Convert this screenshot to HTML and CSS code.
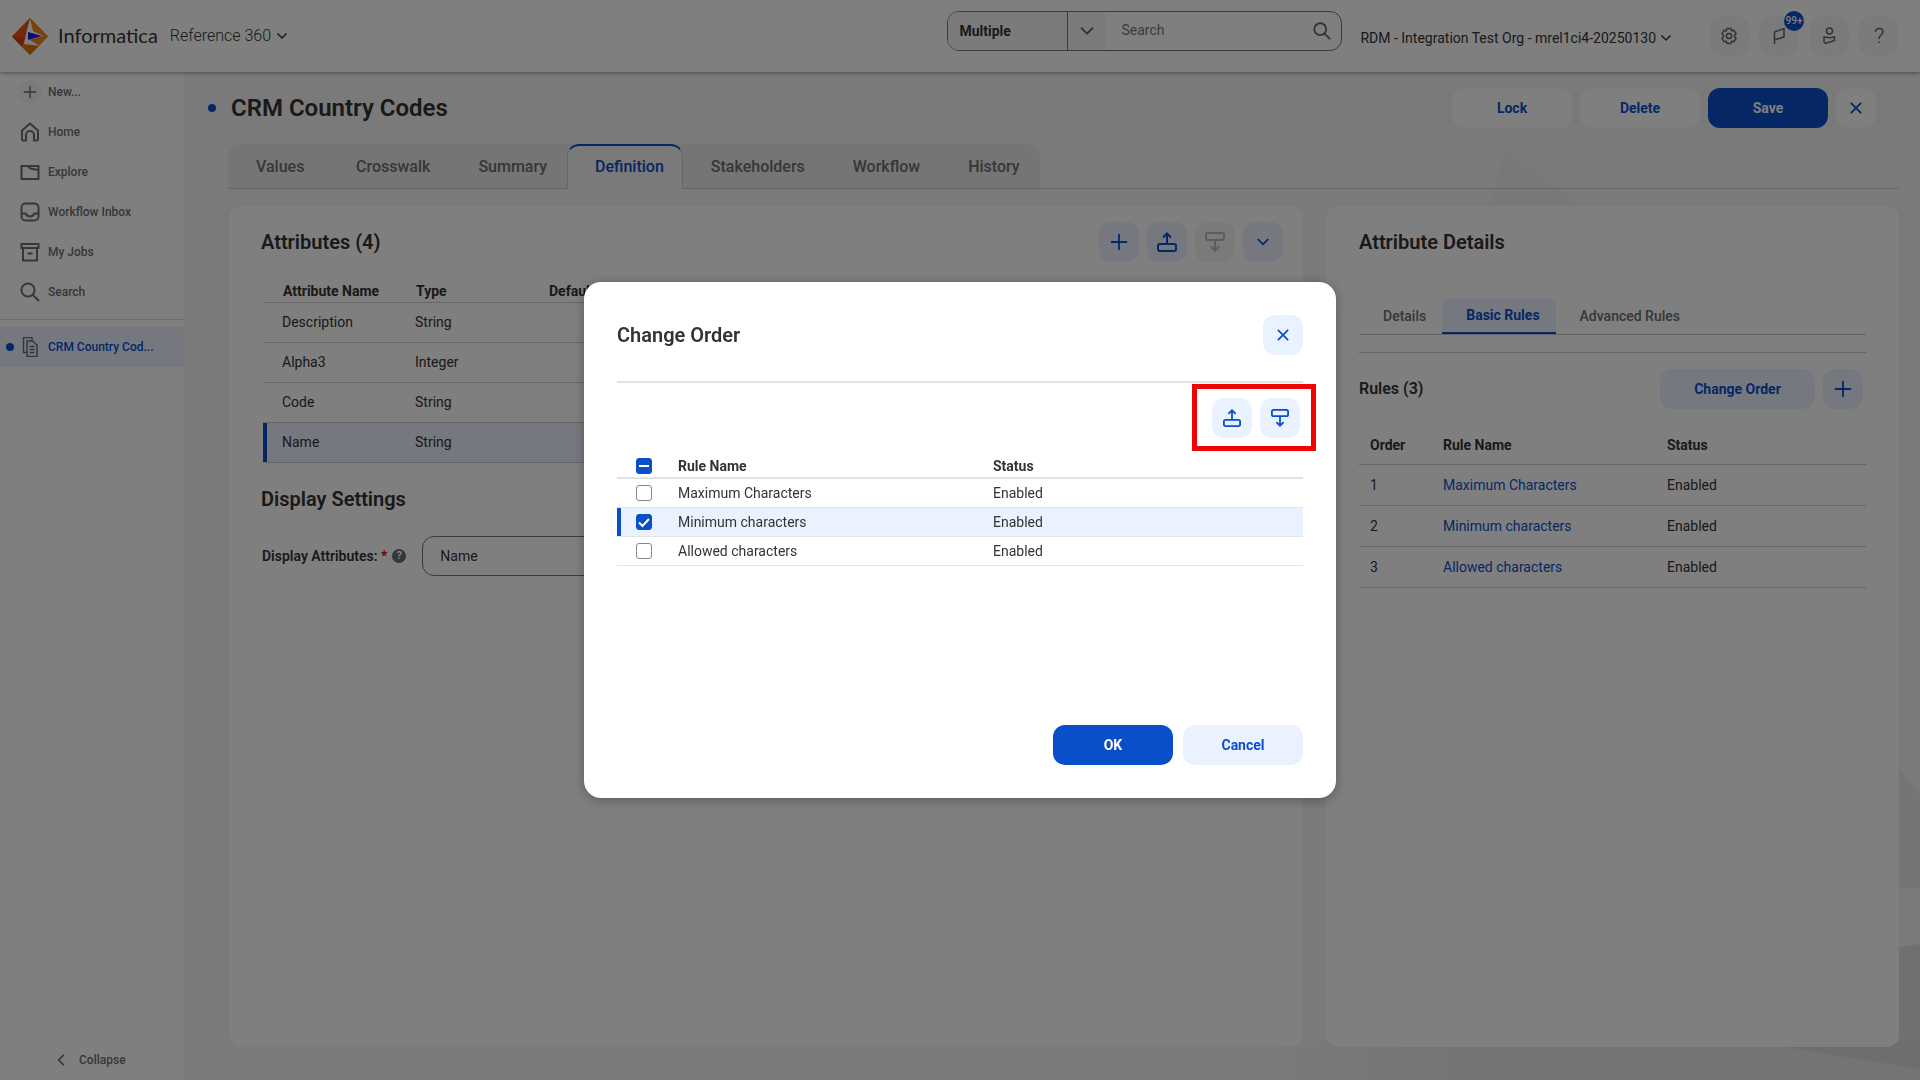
FILE: index.html
```html
<!DOCTYPE html>
<html lang="en">
<head>
<meta charset="utf-8">
<title>CRM Country Codes - Reference 360</title>
<meta name="viewport" content="width=device-width, initial-scale=1">
<link rel="stylesheet" href="styles.css">
</head>
<body>
<svg class="sprite" aria-hidden="true">
  <symbol id="i-chevron" viewBox="0 0 12 12"><path d="M1.500 3.500L6 8l4.500-4.500"/></symbol>
  <symbol id="i-plus" viewBox="0 0 20 20"><path d="M10 1v18M1 10h18"/></symbol>
  <symbol id="i-close" viewBox="0 0 14 14"><path d="M1 1l12 12M13 1L1 13"/></symbol>
  <symbol id="i-search" viewBox="0 0 20 20"><circle cx="8" cy="8" r="6.600"/><path d="M12.800 12.800L19 19"/></symbol>
  <symbol id="i-up" viewBox="0 0 20 20"><rect x="1" y="12" width="18" height="7" rx="2"/><path d="M10 12V1.500M6 5.500l4-4 4 4"/></symbol>
  <symbol id="i-down" viewBox="0 0 20 20"><rect x="1" y="1" width="18" height="7" rx="2"/><path d="M10 8v10.500M6 14.500l4 4 4-4"/></symbol>
</svg>

<div class="app">
  <header class="topbar">
    <a class="brand" href="#" aria-label="Informatica home">
      <svg class="logo" viewBox="0 0 36 37">
        <path fill="#f08414" d="M18 0l18 18.500L18 37 0 18.500z"/>
        <path fill="#e8501a" d="M18 0L0 18.500l10 10.300L15 14z"/>
        <path fill="#cf3c18" d="M0 18.500l10 10.300 3-8.300z"/>
        <path fill="#e07008" d="M10 28.800L18 37l9-9.300-8-1.700z"/>
        <path fill="#fff" d="M18 0l-3.500 14L12 26l15 1.700-9-6 14-3.700-11-5z"/>
        <path fill="#f08414" d="M18 0l18 18.500-8.500 8.700L18 22l14-4-10-5z"/>
        <path fill="#1a1aee" d="M16 14l14 4-14 4z"/>
      </svg>
      <span class="brand-name">Informatica</span>
    </a>
    <button class="product" type="button">Reference 360 <svg class="ico s12"><use href="#i-chevron"/></svg></button>
    <form class="finder" role="search">
      <select class="scope" aria-label="Search scope"><option>Multiple</option></select>
      <button class="scope-toggle" type="button" aria-label="Open scopes"><svg class="ico s16"><use href="#i-chevron"/></svg></button>
      <input class="finder-text" type="text" placeholder="Search" aria-label="Search">
      <button class="finder-go" type="button" aria-label="Run search"><svg class="ico s18"><use href="#i-search"/></svg></button>
    </form>
    <button class="org" type="button">RDM - Integration Test Org - mrel1ci4-20250130 <svg class="ico s12"><use href="#i-chevron"/></svg></button>
    <div class="tools">
      <button class="btn-icon gray" type="button" aria-label="Settings"><svg class="ico thin s18" viewBox="0 0 18 18"><circle cx="9" cy="9" r="2.600"/><path d="M7 1.500h4l.7 2.200 2.300-.3 2 3.200-1.500 1.600v1.600L16 11.400l-2 3.200-2.300-.3-.7 2.200H7l-.7-2.200-2.300.3-2-3.200 1.500-1.600V8.200L2 6.600l2-3.200 2.300.3z"/></svg></button>
      <button class="btn-icon gray" type="button" aria-label="Notifications"><svg class="ico thin s18" viewBox="0 0 18 18"><path d="M4.500 17V5L14 1.500v8.500L4.500 13"/></svg><span class="badge">99+</span></button>
      <button class="btn-icon gray" type="button" aria-label="Account"><svg class="ico thin s18" viewBox="0 0 18 18"><circle cx="9.500" cy="4" r="3"/><path d="M4 10l6 .8 4.500-.8v3.500L5.500 16.500 4 15z"/></svg></button>
      <button class="btn-icon gray" type="button" aria-label="Help"><svg class="ico thin s18" viewBox="0 0 18 18"><path d="M5.500 5c0-5 7.500-4.500 7.500-.5 0 3.500-4 3-4 7.500M9 14.500v1.500"/></svg></button>
    </div>
  </header>

  <div class="body">
    <nav class="side" aria-label="Main">
      <ul class="side-list">
        <li><a class="side-item" href="#"><span class="side-ico round"><svg class="ico s14"><use href="#i-plus"/></svg></span>New...</a></li>
        <li><a class="side-item" href="#"><span class="side-ico"><svg class="ico s20" viewBox="0 0 20 20"><path d="M3 18.500a1 1 0 0 1-1-1V8.500L10 1.500l8 7v9a1 1 0 0 1-1 1h-3V13a4 4 0 0 0-8 0v5.500z"/></svg></span>Home</a></li>
        <li><a class="side-item" href="#"><span class="side-ico"><svg class="ico s20" viewBox="0 0 20 20"><path d="M1.500 4h6l3 2.500 8 1.500V17h-17zM7.500 4h11v4"/></svg></span>Explore</a></li>
        <li><a class="side-item" href="#"><span class="side-ico"><svg class="ico s20" viewBox="0 0 20 20"><rect x="1.500" y="1.500" width="17" height="17" rx="4"/><path d="M1.500 11.500h4c2 4 7 4 9 0h4"/></svg></span>Workflow Inbox</a></li>
        <li><a class="side-item" href="#"><span class="side-ico"><svg class="ico s20" viewBox="0 0 20 20"><path d="M1.500 2h17v4h-17zM3 6v12.500h14V6M7.500 11.500h5"/></svg></span>My Jobs</a></li>
        <li><a class="side-item" href="#"><span class="side-ico"><svg class="ico s20"><use href="#i-search"/></svg></span>Search</a></li>
      </ul>
      <a class="side-item current" href="#"><span class="dot"></span><span class="side-ico"><svg class="ico thin s20" viewBox="0 0 20 20"><path d="M7 15.500H3.500v-15H12V4M7 4h5.500L17 8v11.500H7zM9.500 9.500h5M9.500 12.500h5M9.500 15.500h5"/></svg></span>CRM Country Cod...</a>
      <button class="collapse" type="button"><svg class="ico s14 left"><use href="#i-chevron"/></svg>Collapse</button>
    </nav>

    <main class="work">
      <svg class="backdrop" viewBox="0 0 1736 1008" preserveAspectRatio="xMaxYMin slice" aria-hidden="true">
        <defs><linearGradient id="fade" x1="0" x2="1"><stop offset="0" stop-color="#f4f4f4"/><stop offset=".35" stop-color="#e8e8e8"/><stop offset="1" stop-color="#e8e8e8"/></linearGradient></defs>
        <path fill="#f0f0f0" d="M1321 78l75 56h-90z"/>
        <path fill="#ebebeb" d="M1710 690l26 32v94h-26z"/>
        <path fill="#e0e0e0" d="M1700 878l36-6v136h-36z"/>
        <path fill="url(#fade)" d="M1090 970h646v38h-646z"/>
        <path fill="#dcdcdc" d="M1570 970h166v27z"/>
      </svg>
      <div class="title-row">
        <span class="dot"></span>
        <h1>CRM Country Codes</h1>
        <div class="actions">
          <button class="btn white" type="button">Lock</button>
          <button class="btn white" type="button">Delete</button>
          <button class="btn primary" type="button">Save</button>
          <button class="btn-icon white" type="button" aria-label="Close"><svg class="ico s12"><use href="#i-close"/></svg></button>
        </div>
      </div>
      <div class="tabs">
        <div class="tab-strip" role="tablist">
          <button class="tab" role="tab" type="button">Values</button>
          <button class="tab" role="tab" type="button">Crosswalk</button>
          <button class="tab" role="tab" type="button">Summary</button>
          <button class="tab active" role="tab" type="button" aria-selected="true">Definition</button>
          <button class="tab" role="tab" type="button">Stakeholders</button>
          <button class="tab" role="tab" type="button">Workflow</button>
          <button class="tab" role="tab" type="button">History</button>
        </div>
      </div>

      <div class="panels">
        <section class="panel attributes">
          <div class="panel-head">
            <h2>Attributes (4)</h2>
            <div class="icon-row">
              <button class="btn-icon" type="button" aria-label="Add attribute"><svg class="ico s18"><use href="#i-plus"/></svg></button>
              <button class="btn-icon" type="button" aria-label="Move up"><svg class="ico s20"><use href="#i-up"/></svg></button>
              <button class="btn-icon off" type="button" aria-label="Move down" disabled><svg class="ico s20"><use href="#i-down"/></svg></button>
              <button class="btn-icon" type="button" aria-label="More actions"><svg class="ico s14"><use href="#i-chevron"/></svg></button>
            </div>
          </div>
          <div class="attr-table">
            <table class="grid attr-grid">
              <colgroup><col class="c-attr"><col class="c-type"><col></colgroup>
              <thead><tr><th>Attribute Name</th><th>Type</th><th>Default Value</th></tr></thead>
              <tbody>
                <tr><td>Description</td><td>String</td><td></td></tr>
                <tr><td>Alpha3</td><td>Integer</td><td></td></tr>
                <tr><td>Code</td><td>String</td><td></td></tr>
                <tr class="picked"><td>Name</td><td>String</td><td></td></tr>
              </tbody>
            </table>
          </div>
          <h2 class="settings-title">Display Settings</h2>
          <div class="field">
            <label for="display-attributes">Display Attributes: <span class="req">*</span></label>
            <span class="help" aria-hidden="true">?</span>
            <input id="display-attributes" type="text" value="Name">
          </div>
        </section>

        <section class="panel details">
          <div class="panel-head"><h2>Attribute Details</h2></div>
          <div class="subtabs" role="tablist">
            <button class="subtab" role="tab" type="button">Details</button>
            <button class="subtab active" role="tab" type="button" aria-selected="true">Basic Rules</button>
            <button class="subtab" role="tab" type="button">Advanced Rules</button>
          </div>
          <div class="rules-head">
            <h3>Rules (3)</h3>
            <button class="btn tint wide" type="button">Change Order</button>
            <button class="btn-icon" type="button" aria-label="Add rule"><svg class="ico s18"><use href="#i-plus"/></svg></button>
          </div>
          <table class="grid rule-grid">
            <colgroup><col class="c-order"><col class="c-rule"><col></colgroup>
            <thead><tr><th>Order</th><th>Rule Name</th><th>Status</th></tr></thead>
            <tbody>
              <tr><td>1</td><td><a href="#">Maximum Characters</a></td><td>Enabled</td></tr>
              <tr><td>2</td><td><a href="#">Minimum characters</a></td><td>Enabled</td></tr>
              <tr><td>3</td><td><a href="#">Allowed characters</a></td><td>Enabled</td></tr>
            </tbody>
          </table>
        </section>
      </div>
    </main>
  </div>
</div>

<div class="overlay">
  <div class="dialog" role="dialog" aria-modal="true" aria-labelledby="dialog-title">
    <div class="dialog-head">
      <h2 id="dialog-title">Change Order</h2>
      <button class="btn-icon" type="button" aria-label="Close dialog"><svg class="ico s12"><use href="#i-close"/></svg></button>
    </div>
    <div class="dialog-tools">
      <div class="move">
        <button class="btn-icon" type="button" aria-label="Move rule up"><svg class="ico s18"><use href="#i-up"/></svg></button>
        <button class="btn-icon" type="button" aria-label="Move rule down"><svg class="ico s18"><use href="#i-down"/></svg></button>
        <span class="callout"></span>
      </div>
    </div>
    <table class="grid order-grid">
      <colgroup><col class="c-check"><col class="c-name"><col></colgroup>
      <thead><tr><th><input class="check mixed" type="checkbox" aria-label="Select all rules" aria-checked="mixed"></th><th>Rule Name</th><th>Status</th></tr></thead>
      <tbody>
        <tr><td><input class="check" type="checkbox" id="rule-max"></td><td><label for="rule-max">Maximum Characters</label></td><td>Enabled</td></tr>
        <tr class="picked"><td><input class="check" type="checkbox" id="rule-min" checked></td><td><label for="rule-min">Minimum characters</label></td><td>Enabled</td></tr>
        <tr><td><input class="check" type="checkbox" id="rule-allowed"></td><td><label for="rule-allowed">Allowed characters</label></td><td>Enabled</td></tr>
      </tbody>
    </table>
    <div class="dialog-foot">
      <button class="btn primary" type="button">OK</button>
      <button class="btn tint" type="button">Cancel</button>
    </div>
  </div>
</div>
</body>
</html>
```
FILE: styles.css
```css
:root {
  --blue: #0a4fca;
  --tint: #ebf2ff;
  --ink: #333;
  --muted: #777;
  --line: #e3e3e3;
  --page: #f4f4f4;
}

* { box-sizing: border-box; }

body {
  margin: 0;
  color: var(--ink);
  font: 14px/20px Roboto, "Liberation Sans", sans-serif;
}

button, input, select { font: inherit; color: inherit; }
button { padding: 0; border: 0; background: none; cursor: pointer; }
a { color: var(--blue); text-decoration: none; }
h1, h2, h3 { margin: 0; font-weight: 600; }
h1 { font-size: 24px; line-height: 32px; }
h2 { font-size: 20px; line-height: 24px; }
h3 { font-size: 16px; line-height: 24px; }

.sprite { position: absolute; width: 0; height: 0; }

/* Icons */
.ico { flex: none; fill: none; stroke: currentColor; stroke-width: 2; }
.ico.thin { stroke-width: 1.5; }
.s12 { width: 12px; height: 12px; }
.s14 { width: 14px; height: 14px; }
.s16 { width: 16px; height: 16px; }
.s18 { width: 18px; height: 18px; }
.s20 { width: 20px; height: 20px; }
.product .ico, .org .ico, .scope-toggle .ico, .icon-row .s14, .collapse .ico { stroke-width: 1.5; }
.left { transform: rotate(90deg); }

.dot { flex: none; width: 8px; height: 8px; border-radius: 50%; background: var(--blue); }

/* Buttons */
.btn {
  width: 120px;
  height: 40px;
  border-radius: 12px;
  color: var(--blue);
  font-weight: 700;
}
.btn.white, .btn-icon.white { background: #fff; }
.btn.primary { background: var(--blue); color: #fff; }
.btn.tint { background: var(--tint); }
.btn.wide { width: 155px; }
.btn-icon {
  position: relative;
  display: flex;
  flex: none;
  align-items: center;
  justify-content: center;
  width: 40px;
  height: 40px;
  border-radius: 12px;
  background: var(--tint);
  color: var(--blue);
}
.btn-icon.gray { background: #f6f6f6; color: #666; }
.btn-icon.off { background: #f4f4f4; color: #bbb; }

.app { display: flex; flex-direction: column; min-height: 100vh; }

/* Top bar */
.topbar {
  position: relative;
  z-index: 1;
  display: flex;
  align-items: center;
  height: 72px;
  padding: 0 21px 0 12px;
  background: #fff;
  box-shadow: 0 1px 4px rgba(0, 0, 0, .4);
}
.brand { display: flex; align-items: center; gap: 10px; color: var(--ink); }
.logo { width: 36px; height: 37px; }
.brand-name { padding-bottom: 3px; font: 400 20px/24px Lato, sans-serif; }
.product { display: flex; align-items: center; gap: 5px; margin-left: 12px; font-size: 16px; font-weight: 300; }
.finder {
  display: flex;
  align-self: flex-end;
  width: 395px;
  height: 40px;
  margin: 0 18px 21px auto;
  overflow: hidden;
  border: 1px solid var(--muted);
  border-radius: 12px;
}
.scope {
  width: 120px;
  padding: 0 11px;
  border: 0;
  border-right: 1px solid var(--muted);
  background: #f6f6f6;
  appearance: none;
  font-weight: 700;
}
.scope-toggle { display: flex; align-items: center; justify-content: center; width: 38px; background: #f6f6f6; color: #666; }
.finder-text { flex: 1; min-width: 0; padding: 0 0 3px 15px; border: 0; background: none; }
.finder-text::placeholder { color: var(--muted); opacity: 1; }
.finder-go { display: flex; align-items: center; margin-right: 10px; color: #666; }
.org { display: flex; align-items: center; gap: 4px; padding-top: 3px; }
.tools { display: flex; gap: 10px; margin-left: 37px; }
.badge {
  position: absolute;
  top: -5px;
  right: -5px;
  width: 20px;
  height: 20px;
  border-radius: 50%;
  background: var(--blue);
  color: #fff;
  font-size: 10px;
  font-weight: 500;
}

.body { display: flex; flex: 1; }

/* Side navigation */
.side { display: flex; flex: none; flex-direction: column; width: 184px; background: #fff; color: #6e6e6e; font-size: 12px; font-weight: 500; }
.side-list { margin: 0 0 7px; padding: 0 0 7px; border-bottom: 1px solid #ddd; list-style: none; }
.side-item { display: flex; align-items: center; height: 40px; padding-left: 18px; color: inherit; }
.side-ico { display: flex; align-items: center; justify-content: center; width: 24px; height: 24px; margin-right: 6px; border-radius: 50%; }
.side-ico.round { background: #f6f6f6; }
.side-item.current { padding-left: 6px; background: var(--tint); color: var(--blue); }
.side-item.current .side-ico { margin-left: 4px; color: #6e6e6e; }
.collapse { display: flex; align-items: center; gap: 11px; height: 40px; margin: auto 0 0 54px; }

/* Workspace */
.work { position: relative; display: flex; flex: 1; flex-direction: column; min-width: 0; padding: 16px 21px 33px 24px; background: var(--page); }
.backdrop { position: absolute; inset: 0; width: 100%; height: 100%; }
.title-row, .tabs, .panels { position: relative; }
.title-row { display: flex; align-items: center; height: 40px; padding-right: 23px; }
.title-row h1 { margin-left: 15px; }
.actions { display: flex; gap: 8px; margin-left: auto; }

.tabs { display: flex; margin: 16px 0 17px 20px; box-shadow: inset 0 -1px #cfcfcf; }
.tab-strip { display: flex; height: 45px; border-radius: 12px 12px 0 0; background: rgba(0, 0, 0, .035); }
.tab { min-width: 100px; padding: 0 20px 0 28px; color: #6e6e6e; font-size: 16px; font-weight: 500; text-align: left; }
.tab.active {
  padding: 0 18px 2px 27px;
  border: 1px solid #cfcfcf;
  border-top: 2px solid var(--blue);
  border-bottom: 0;
  border-radius: 12px 12px 0 0;
  background: var(--page);
  color: var(--blue);
}

.panels { display: grid; flex: 1; grid-template-columns: 1074fr 573fr; gap: 23px; margin-left: 21px; }
.panel { min-width: 0; border-radius: 12px; background: #fff; }
.attributes { padding: 16px 20px 32px 32px; }
.details { padding: 16px 33px 32px; }
.panel-head { display: flex; align-items: center; justify-content: space-between; height: 40px; }
.icon-row { display: flex; gap: 8px; }

/* Tables */
.grid { width: 100%; border-collapse: collapse; table-layout: fixed; text-align: left; }
.grid th, .grid td { padding: 0; border-bottom: 1px solid var(--line); }
.grid th { font-weight: 700; }

.attr-table { padding: 18px 0 0 2px; }
.attr-grid th { height: 22px; padding-left: 20px; border-color: #ccc; }
.attr-grid td { height: 40px; padding-left: 19px; border-color: #ccc; }
.attr-grid .picked { background: var(--tint); }
.attr-grid .picked td:first-child { box-shadow: inset 4px 0 var(--blue); }
.c-attr { width: 133px; }
.c-type { width: 133px; }

.settings-title { margin: 24px 0 25px; }
.field { display: flex; align-items: center; padding-left: 1px; }
.field label { font-weight: 600; }
.req { color: #d00; }
.help { width: 14px; height: 14px; margin: 0 16px 0 5px; border-radius: 50%; background: #6e6e6e; color: #fff; font-size: 11px; font-weight: 700; line-height: 14px; text-align: center; }
.field input { flex: 1; height: 40px; padding: 0 17px; border: 1px solid var(--muted); border-radius: 12px; background: #fff; }

/* Attribute details */
.subtabs { display: flex; height: 37px; margin: 36px 0 17px; border-bottom: 1px solid #c8c8c8; }
.subtab { padding: 0 16px 0 24px; color: #6e6e6e; font-weight: 500; }
.subtab.active { border-bottom: 2px solid var(--blue); border-radius: 8px 8px 0 0; background: var(--tint); color: var(--blue); font-weight: 700; }
.rules-head { display: flex; align-items: center; gap: 8px; padding: 16px 3px 0 0; border-top: 1px solid #ccc; }
.rules-head h3 { margin-right: auto; }
.rule-grid { margin-top: 17px; }
.rule-grid th, .rule-grid td { height: 41px; padding-left: 11px; border-color: #ccc; }
.rule-grid th { height: 38px; }
.c-order { width: 73px; }
.c-rule { width: 224px; }

/* Dialog */
.overlay {
  position: fixed;
  z-index: 2;
  inset: 0;
  display: flex;
  align-items: center;
  justify-content: center;
  background: rgba(0, 0, 0, .5);
}
.dialog {
  display: flex;
  flex-direction: column;
  width: 752px;
  padding: 33px;
  border-radius: 17px;
  background: #fff;
  box-shadow: 0 2px 12px rgba(0, 0, 0, .3);
}
.dialog-head { display: flex; align-items: center; justify-content: space-between; padding-bottom: 26px; border-bottom: 2px solid #e2e2e2; }
.dialog-tools { display: flex; justify-content: flex-end; padding: 15px 3px 17px 0; }
.move { position: relative; display: flex; gap: 8px; }
.callout { position: absolute; inset: -14px -16px -13px -20px; border: 5px solid #ee0404; pointer-events: none; }
.order-grid th { height: 23px; border-bottom-width: 2px; }
.order-grid td { height: 29px; }
.order-grid th:first-child, .order-grid td:first-child { padding-left: 19px; }
.order-grid .picked { background: var(--tint); }
.order-grid .picked td:first-child { box-shadow: inset 4px 0 var(--blue); }
.c-check { width: 61px; }
.c-name { width: 315px; }
.check {
  display: block;
  width: 16px;
  height: 16px;
  margin: 0;
  border: 1px solid #888;
  border-radius: 3px;
  background: #fff center no-repeat;
  appearance: none;
}
.check:checked, .check.mixed { border-color: var(--blue); background-color: var(--blue); }
.check:checked { background-image: url("data:image/svg+xml,%3Csvg xmlns='http://www.w3.org/2000/svg' width='14' height='14' fill='none' stroke='white' stroke-width='2'%3E%3Cpath d='M2 7.500l3.500 3.500L12 4'/%3E%3C/svg%3E"); }
.check.mixed { background-image: url("data:image/svg+xml,%3Csvg xmlns='http://www.w3.org/2000/svg' width='14' height='14' stroke='white' stroke-width='2'%3E%3Cpath d='M2 7h10'/%3E%3C/svg%3E"); }
.dialog-foot { display: flex; justify-content: flex-end; gap: 10px; margin-top: 159px; }
```
